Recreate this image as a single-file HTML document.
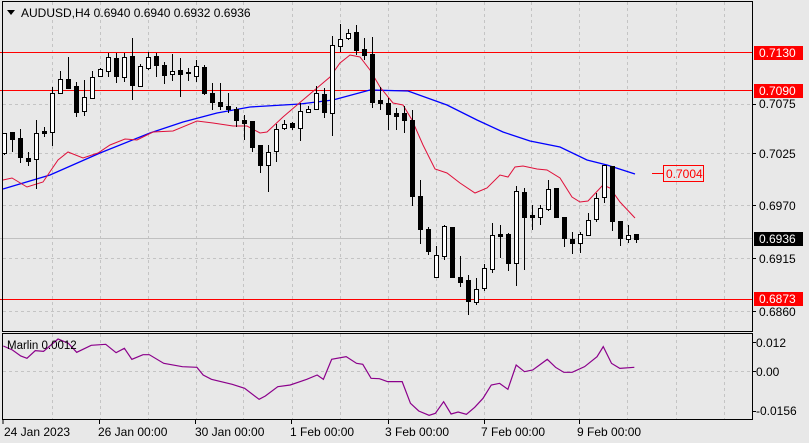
<!DOCTYPE html>
<html><head><meta charset="utf-8"><style>
body{margin:0;background:#e8e8e8;width:809px;height:443px;overflow:hidden;font-family:"Liberation Sans",sans-serif}
svg{display:block}
</style></head><body>
<svg id="s" width="809" height="443" xmlns="http://www.w3.org/2000/svg" font-family="Liberation Sans, sans-serif" font-size="12">
<rect width="809" height="443" fill="#e8e8e8"/>
<g id="grid" stroke="#c4c4c4" stroke-dasharray="3,3" stroke-width="1"></g>
<line x1="0" y1="238.5" x2="752" y2="238.5" stroke="#c0c0c0"/>
<line x1="0" y1="52.5" x2="752" y2="52.5" stroke="#ff0000"/>
<line x1="0" y1="90.5" x2="752" y2="90.5" stroke="#ff0000"/>
<line x1="0" y1="299.5" x2="752" y2="299.5" stroke="#ff0000"/>
<polyline fill="none" stroke="#0000ff" stroke-width="1.3" points="3,189 50,175 100,153 150,133 183,122 217,113 250,107 300,104 333,100 370,90 408,91 447,105 477,120 503,132 530,141 560,147 587,160 607,165 635,174"/>
<polyline fill="none" stroke="#e0103a" stroke-width="1" points="3,180 12,178 27,187 43,182 58,160 68,152 83,158 98,153 110,145 125,139 137,140 153,132 173,131 197,121 213,123 233,126 247,126 260,133 267,132 283,117 297,105 317,88 330,77 340,63 350,55 360,57 370,70 380,87 393,103 403,105 412,120 423,145 435,169 447,173 460,183 475,193 487,188 500,175 508,177 515,167 523,166 537,169 547,170 560,178 572,197 580,202 588,201 603,185 610,188 620,202 635,218"/>
<g id="c"></g>
<line x1="652" y1="173.5" x2="663" y2="173.5" stroke="#ff0000"/>
<rect x="663.5" y="165.5" width="40" height="16" fill="none" stroke="#ff0000"/>
<text x="666" y="178" fill="#ff0000" font-size="12">0.7004</text>
<text x="21" y="17" font-size="12" fill="#000">AUDUSD,H4  0.6940 0.6940 0.6932 0.6936</text>
<polygon points="7,10 15,10 11,15" fill="#000"/>
<!-- frames -->
<rect x="2.5" y="1.5" width="750" height="330" fill="none" stroke="#000"/>
<rect x="2.5" y="333.5" width="750" height="86" fill="none" stroke="#000"/>
<!-- indicator -->
<line x1="3" y1="371.5" x2="752" y2="371.5" stroke="#c4c4c4" stroke-dasharray="3,3"/>
<g transform="translate(0,330) scale(0.4146,0.3333)"><polyline fill="none" stroke="#8b008b" stroke-width="1.2" vector-effect="non-scaling-stroke" points="8,48 30,60 50,78 65,85 85,62 105,64 140,27 165,40 185,67 220,46 255,43 280,68 300,55 318,88 345,74 360,74 395,100 440,110 475,112 490,135 510,148 560,163 590,175 625,208 640,198 670,170 700,165 740,148 765,135 780,148 800,88 835,80 860,100 875,103 895,145 915,146 935,155 970,155 990,220 1010,243 1035,256 1050,250 1070,215 1088,252 1105,246 1125,253 1145,232 1165,205 1185,165 1205,160 1225,178 1245,105 1265,125 1285,120 1320,88 1340,112 1360,127 1380,127 1410,110 1440,80 1455,50 1475,100 1495,115 1530,112"/></g>
<text x="7" y="349" font-size="11.5" fill="#000">Marlin 0.0012</text>
<!-- axis labels -->
<g font-size="12" fill="#000">
<text x="759" y="108">0.7075</text>
<text x="759" y="158">0.7025</text>
<text x="759" y="210">0.6970</text>
<text x="759" y="263">0.6915</text>
<text x="759" y="316">0.6860</text>
<text x="756" y="347">0.012</text>
<text x="756" y="376">0.00</text>
<text x="756" y="415">-0.0156</text>
</g>
<g stroke="#000"><line x1="752" y1="104.5" x2="756" y2="104.5"/><line x1="752" y1="153.5" x2="756" y2="153.5"/><line x1="752" y1="205.5" x2="756" y2="205.5"/><line x1="752" y1="258.5" x2="756" y2="258.5"/><line x1="752" y1="311.5" x2="756" y2="311.5"/><line x1="752" y1="342.5" x2="756" y2="342.5"/><line x1="752" y1="371.5" x2="756" y2="371.5"/><line x1="752" y1="411.5" x2="756" y2="411.5"/></g>
<rect x="754" y="46" width="49" height="14" fill="#ff0000"/><text x="759" y="57" fill="#fff">0.7130</text>
<rect x="754" y="84" width="49" height="14" fill="#ff0000"/><text x="759" y="95" fill="#fff">0.7090</text>
<rect x="754" y="232" width="49" height="14" fill="#000"/><text x="759" y="243" fill="#fff">0.6936</text>
<rect x="754" y="292" width="49" height="14" fill="#ff0000"/><text x="759" y="303" fill="#fff">0.6873</text>
<g font-size="12" fill="#000">
<text x="4" y="436">24 Jan 2023</text>
<text x="98" y="436">26 Jan 00:00</text>
<text x="195" y="436">30 Jan 00:00</text>
<text x="290" y="436">1 Feb 00:00</text>
<text x="385" y="436">3 Feb 00:00</text>
<text x="481" y="436">7 Feb 00:00</text>
<text x="577" y="436">9 Feb 00:00</text>
</g>
<g stroke="#000"><line x1="3" y1="420" x2="3" y2="424"/><line x1="99.5" y1="420" x2="99.5" y2="424"/><line x1="195.5" y1="420" x2="195.5" y2="424"/><line x1="291.5" y1="420" x2="291.5" y2="424"/><line x1="388.5" y1="420" x2="388.5" y2="424"/><line x1="484.5" y1="420" x2="484.5" y2="424"/><line x1="579.5" y1="420" x2="579.5" y2="424"/></g>
</svg>
<script>
var NS="http://www.w3.org/2000/svg";
function el(p,n,a){var e=document.createElementNS(NS,n);for(var k in a)e.setAttribute(k,a[k]);p.appendChild(e);return e;}
var g=document.getElementById('grid');
var xs=[52,100,148,196,243,292,340,388,436,484,531,579,627,676,724];
xs.forEach(function(x){el(g,'line',{x1:x+.5,y1:2,x2:x+.5,y2:331});el(g,'line',{x1:x+.5,y1:334,x2:x+.5,y2:419});});
[104,153,205,258,311].forEach(function(y){el(g,'line',{x1:3,y1:y+.5,x2:752,y2:y+.5});});
var D=[[133,155,133,153,1],[132,152,132,139,0],[129,163,138,157,0],[152,166,158,161,0],[120,189,133,159,1],[127,137,131,133,0],[87,146,93,132,1],[71,94,79,93,1],[57,89,79,88,0],[82,117,86,112,0],[80,116,97,111,1],[71,99,77,98,1],[68,77,69,76,1],[53,77,57,71,1],[53,83,58,76,0],[53,82,57,77,1],[38,100,56,85,0],[64,87,66,86,1],[52,70,57,68,1],[53,77,56,65,0],[62,84,65,75,0],[54,81,71,74,1],[58,97,70,74,0],[68,81,72,73,0],[60,82,66,76,1],[65,95,67,93,0],[83,110,93,102,0],[83,110,102,106,0],[93,113,106,109,0],[107,127,109,120,0],[115,140,120,123,0],[121,152,121,147,0],[145,173,145,165,0],[145,192,152,165,1],[124,162,129,151,1],[120,130,124,128,1],[122,130,123,127,0],[103,141,111,128,1],[106,113,109,112,1],[86,110,93,109,1],[88,118,94,112,0],[36,136,45,113,1],[24,52,39,46,1],[29,40,33,38,1],[25,55,32,50,0],[38,60,49,55,0],[37,108,54,102,0],[87,110,100,103,0],[98,130,103,114,0],[108,130,113,116,0],[106,133,113,120,0],[110,206,120,196,0],[180,244,196,229,0],[227,255,229,251,0],[246,277,255,277,1],[225,260,226,256,1],[227,278,227,277,0],[256,287,277,282,0],[275,315,280,301,0],[278,305,289,302,1],[264,291,268,288,1],[223,273,235,269,1],[225,258,234,236,0],[233,271,234,263,0],[186,286,191,263,1],[188,270,192,217,0],[205,230,215,217,0],[205,225,208,217,1],[180,211,189,209,1],[188,217,188,217,0],[217,247,217,238,0],[232,254,239,243,0],[232,253,234,243,1],[213,236,220,235,1],[193,222,198,219,1],[165,203,165,197,1],[166,231,166,221,0],[221,246,221,238,0],[225,243,235,239,1],[234,243,234,239,0]];
var c=document.getElementById('c');
D.forEach(function(d,i){var x=Math.round(3.5+8*i);
el(c,'line',{x1:x+.5,y1:d[0],x2:x+.5,y2:d[1],stroke:'#000'});
var h=Math.max(1,d[3]-d[2]);
if(d[4])el(c,'rect',{x:x-1.5,y:d[2]+.5,width:4,height:h,fill:'#fff',stroke:'#000'});
else el(c,'rect',{x:x-2,y:d[2],width:5,height:h+1,fill:'#000'});});
</script>
</body></html>
